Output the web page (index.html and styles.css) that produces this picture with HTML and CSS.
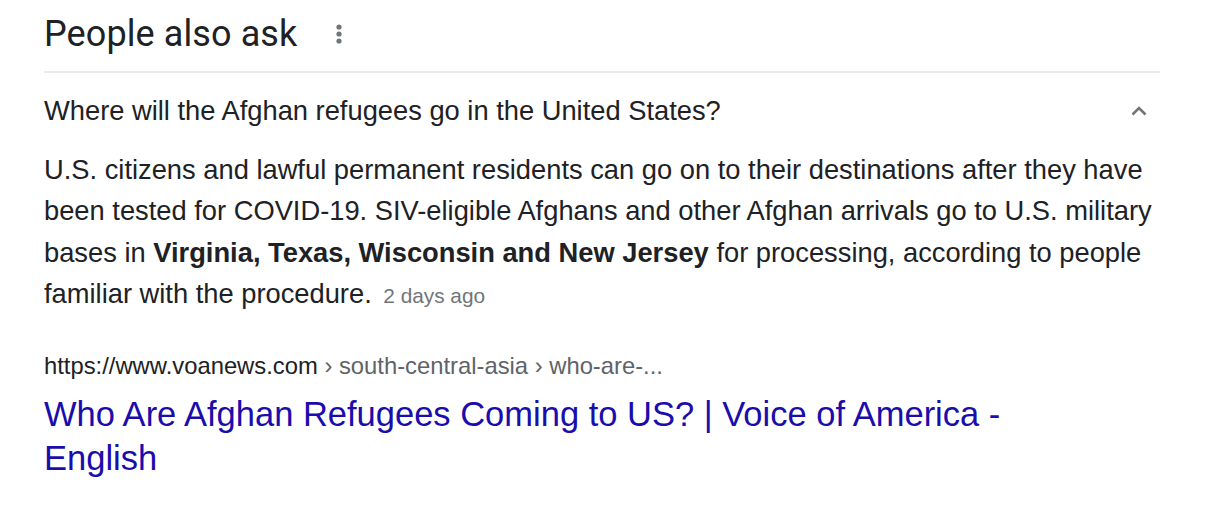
FILE: index.html
```html
<!DOCTYPE html>
<html>
<head>
<meta charset="utf-8">
<link rel="stylesheet" href="styles.css">
</head>
<body>
<div class="paa">
  <div class="paa-head">
    <h2 class="paa-title">People also ask</h2>
    <svg class="more" width="8" height="24" viewBox="0 0 8 24"><circle cx="4" cy="5" r="2.6" fill="#70757a"/><circle cx="4" cy="12" r="2.6" fill="#70757a"/><circle cx="4" cy="19" r="2.6" fill="#70757a"/></svg>
  </div>
  <div class="divider"></div>
  <div class="question">
    <span class="q-text">Where will the Afghan refugees go in the United States?</span>
    <svg class="chev" width="24" height="24" viewBox="0 0 24 24"><path d="M5.5 15.5 L12 9 L18.5 15.5" fill="none" stroke="#70757a" stroke-width="2.6"/></svg>
  </div>
  <p class="answer">U.S. citizens and lawful permanent residents can go on to their destinations after they have been tested for COVID-19. SIV-eligible Afghans and other Afghan arrivals go to U.S. military bases in <b>Virginia, Texas, Wisconsin and New Jersey</b> for processing, according to people familiar with the procedure. <span class="date">2 days ago</span></p>
  <div class="cite">https://www.voanews.com <span class="crumb">› south-central-asia › who-are-...</span></div>
  <a class="result-title" href="#">Who Are Afghan Refugees Coming to US? | Voice of America - English</a>
</div>
</body>
</html>
```

FILE: styles.css
```css
html, body {
  margin: 0;
  padding: 0;
  background: #fff;
}
body {
  font-family: "Liberation Sans", Arial, sans-serif;
  color: #202124;
}
.paa {
  width: 1116px;
  padding: 10px 0 0 44px;
}
.paa-head {
  display: flex;
  align-items: center;
  height: 48px;
}
.paa-title {
  margin: 0;
  font-family: Roboto, "Liberation Sans", sans-serif;
  font-weight: 400;
  font-size: 36px;
  letter-spacing: 0.1px;
  color: #202124;
}
.more {
  margin-left: 38px;
}
.divider {
  height: 2px;
  background: #ebebeb;
  margin-top: 13px;
}
.question {
  display: flex;
  align-items: center;
  justify-content: space-between;
  height: 72px;
  font-size: 27.3px;
  padding-top: 4px;
  box-sizing: border-box;
}
.chev {
  margin-right: 9px;
}
.answer {
  margin: 4px 0 0;
  font-size: 27.3px;
  line-height: 41.33px;
  color: #202124;
}
.answer b {
  font-weight: 700;
}
.date {
  font-size: 20.8px;
  color: #70757a;
  margin-left: 4px;
}
.cite {
  margin-top: 36px;
  font-size: 23.8px;
  line-height: 28px;
  color: #202124;
}
.crumb {
  color: #5f6368;
}
.result-title {
  display: block;
  margin-top: 12px;
  font-size: 34.5px;
  line-height: 44px;
  color: #1a0dab;
  text-decoration: none;
  width: 1000px;
}
```
